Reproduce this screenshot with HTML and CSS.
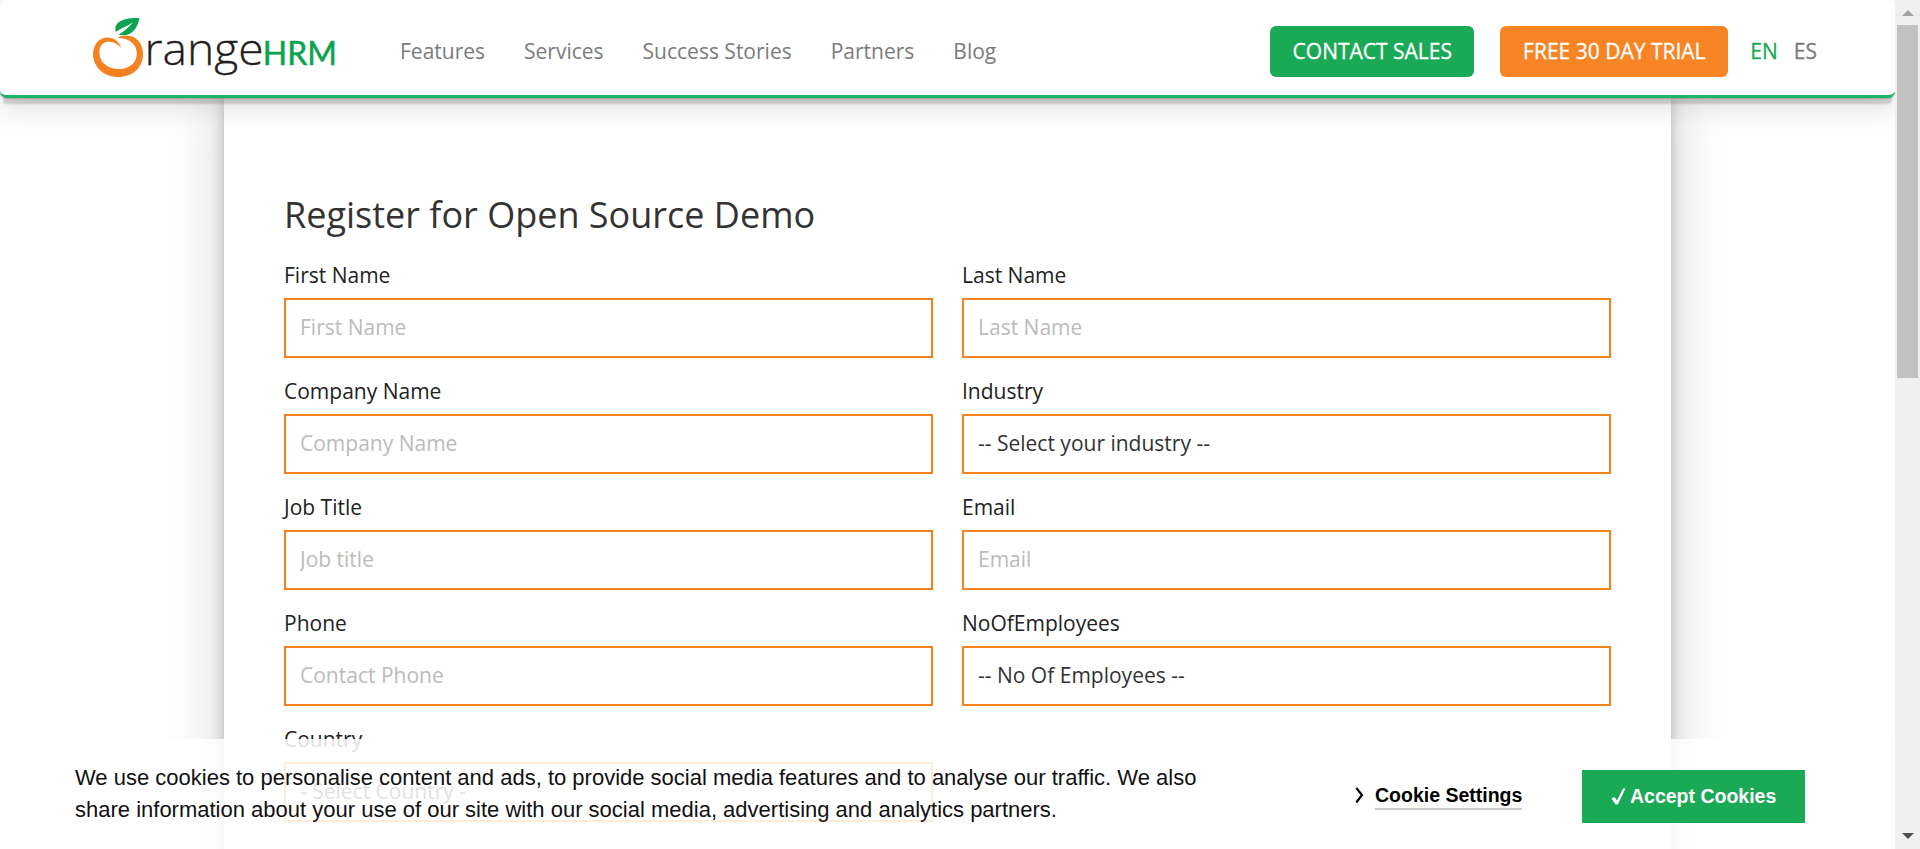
FILE: index.html
```html
<!DOCTYPE html>
<html lang="en">
<head>
<meta charset="utf-8">
<title>Register for Open Source Demo</title>
<link rel="stylesheet" href="styles.css">
</head>
<body>
<div class="window">
  <div class="page">
    <header class="header">
      <svg class="logo" width="260" height="74" viewBox="85 10 260 74" role="img" aria-label="OrangeHRM">
        <path fill="#f58220" d="M121.3 47.8C119.5 41.5 113.5 37 106.5 37.4C98.5 38 93 45.5 93 54C93 67 104 77 118 77C133 77 143 67.5 143 54C143 43 136 35.8 127 35.6C123 35.6 120 36.4 117.5 38C128 37.8 136.6 43.500 136.800 53C137 63 129 69 119 69C108 69 99.800 63 99.400 53C99.200 45.500 103 41.500 109 41.800C114 42 118.200 44.500 121.300 47.800Z"/>
        <path fill="#0ba34f" d="M115.800 31.800C113.500 23 121 17.500 139.500 18C137 30 131 37 118.500 34.800C124 31.500 128.500 27.500 133 22.300C127 26.500 121 28.500 115.800 31.800Z"/>
        <text class="logo-word" x="144.500" y="65" textLength="119" lengthAdjust="spacingAndGlyphs">range</text>
        <text class="logo-hrm" x="262.800" y="64.800" textLength="74" lengthAdjust="spacingAndGlyphs">HRM</text>
      </svg>
      <nav class="nav">
        <a>Features</a><a>Services</a><a>Success Stories</a><a>Partners</a><a>Blog</a>
      </nav>
      <div class="actions">
        <a class="button button-sales">CONTACT SALES</a>
        <a class="button button-trial">FREE 30 DAY TRIAL</a>
        <div class="languages"><a class="active">EN</a><a>ES</a></div>
      </div>
    </header>
    <main class="panel">
      <h1>Register for Open Source Demo</h1>
      <form class="form">
        <label>First Name<input placeholder="First Name"></label>
        <label>Last Name<input placeholder="Last Name"></label>
        <label>Company Name<input placeholder="Company Name"></label>
        <label>Industry<select><option>-- Select your industry --</option></select></label>
        <label>Job Title<input placeholder="Job title"></label>
        <label>Email<input placeholder="Email"></label>
        <label>Phone<input placeholder="Contact Phone"></label>
        <label>NoOfEmployees<select><option>-- No Of Employees --</option></select></label>
        <label>Country<select><option>- Select Country -</option></select></label>
      </form>
    </main>
    <div class="cookies">
      <p>We use cookies to personalise content and ads, to provide social media features and to analyse our traffic. We also<br>share information about your use of our site with our social media, advertising and analytics partners.</p>
      <a class="settings">
        <svg width="9" height="17" viewBox="0 0 9 17"><path d="M1.300 1L7 8L1.300 15.500" fill="none" stroke="#000" stroke-width="2.200"/></svg>
        <span>Cookie Settings</span>
      </a>
      <a class="accept">
        <svg width="16" height="17" viewBox="0 0 16 17"><path d="M.5 10.500L3.500 9L6 12.500L12 .5L14.500 .5L6.800 16.500L4.500 16.500Z" fill="#fff"/></svg>
        <span>Accept Cookies</span>
      </a>
    </div>
  </div>
  <div class="scrollbar">
    <svg width="12" height="6" viewBox="0 0 12 6"><path d="M0 6L6 0L12 6Z" fill="#a3a3a3"/></svg>
    <div class="thumb"></div>
    <svg class="down" width="12" height="6" viewBox="0 0 12 6"><path d="M0 0L6 6L12 0Z" fill="#505050"/></svg>
  </div>
</div>
</body>
</html>
```
FILE: styles.css
```css
* { box-sizing: border-box; }
body {
  margin: 0;
  overflow: hidden;
  background: #fff;
  font: 21px/29px "Open Sans", sans-serif;
}
.window { display: flex; height: 849px; background: #f0f0f0; }
.page {
  position: relative;
  width: 1895px;
  height: 849px;
  overflow: hidden;
  background: #fefefe;
}
.header {
  position: relative;
  z-index: 2;
  display: flex;
  align-items: flex-start;
  height: 98px;
  padding-left: 85px;
  background: #fff;
  border-bottom: 3px solid #18b566;
  border-radius: 7px;
  box-shadow: 0 1px 1px rgba(0, 0, 0, .16), 0 9px 2px -3px rgba(0, 0, 0, .15), 0 8px 30px rgba(0, 0, 0, .14);
}
.logo { flex: none; margin-top: 10px; }
.logo-word { font: 300 44.500px "Open Sans", sans-serif; fill: #231f20; stroke: #231f20; stroke-width: .3; }
.logo-hrm { font: 400 32px Lato, sans-serif; fill: #0ba34f; stroke: #0ba34f; stroke-width: .5; }
.nav {
  display: flex;
  gap: 39px;
  margin: 37px 0 0 55px;
  color: #7b7b7b;
  white-space: nowrap;
}
.actions { display: flex; align-items: center; margin: 26px 78px 0 auto; }
.button {
  height: 51px;
  border-radius: 6px;
  color: #fff;
  line-height: 50px;
  text-align: center;
  white-space: nowrap;
  -webkit-text-stroke: .3px #fff;
}
.button-sales { width: 204px; margin-right: 26px; background: #1aaa55; }
.button-trial { width: 228px; background: #f78525; }
.languages { display: flex; gap: 16px; margin: -1px 0 0 22px; color: #7b7b7b; -webkit-text-stroke: .3px; }
.languages .active { color: #1aaa55; }
.panel {
  width: 1447px;
  height: 900px;
  margin-left: 224px;
  padding: 92px 60px 0;
  background: #fff;
  box-shadow: 0 0 12px rgba(0, 0, 0, .2), 0 0 50px rgba(0, 0, 0, .2);
}
h1 {
  margin: 0 0 20px;
  color: #333;
  font-size: 36px;
  font-weight: 400;
  line-height: 50px;
}
.form {
  display: grid;
  grid-template-columns: 649px 649px;
  grid-auto-rows: 98px;
  gap: 18px 29px;
}
label { display: flex; flex-direction: column; gap: 7px; color: #222; line-height: 31px; }
input, select {
  width: 100%;
  height: 60px;
  margin: 0;
  padding: 0 14px 2px;
  appearance: none;
  border: 2px solid #f58220;
  border-radius: 0;
  outline: 0;
  background: #fff;
  color: #333;
  font: inherit;
  line-height: 29px;
}
input::placeholder { color: #bbb; opacity: 1; }
.cookies {
  position: absolute;
  z-index: 3;
  left: 0;
  right: 0;
  bottom: 0;
  display: flex;
  align-items: flex-start;
  height: 110px;
  padding-left: 75px;
  background: rgba(255, 255, 255, .85);
  color: #111;
  font: 22px/32px "Liberation Sans", Arial, sans-serif;
}
.cookies p { width: 1280px; margin: 23px 0 0; white-space: nowrap; }
.settings, .accept { display: flex; font-size: 19.500px; font-weight: 700; }
.settings { width: 227px; gap: 11px; margin-top: 45px; color: #000; }
.settings svg { margin-top: 3px; }
.settings span { height: 26px; line-height: 23px; border-bottom: 2px solid #ccc; white-space: nowrap; }
.accept {
  width: 223px;
  height: 53px;
  margin-top: 31px;
  padding: 0 0 1px 29px;
  gap: 3px;
  align-items: center;
  background: #1aaa55;
  color: #fff;
  white-space: nowrap;
}
.scrollbar {
  display: flex;
  flex-direction: column;
  align-items: center;
  width: 25px;
  padding: 10px 0;
  background: #f0f0f0;
}
.thumb { width: 21px; height: 353px; margin-top: 9px; background: #c1c1c1; }
.down { margin-top: auto; }
```
